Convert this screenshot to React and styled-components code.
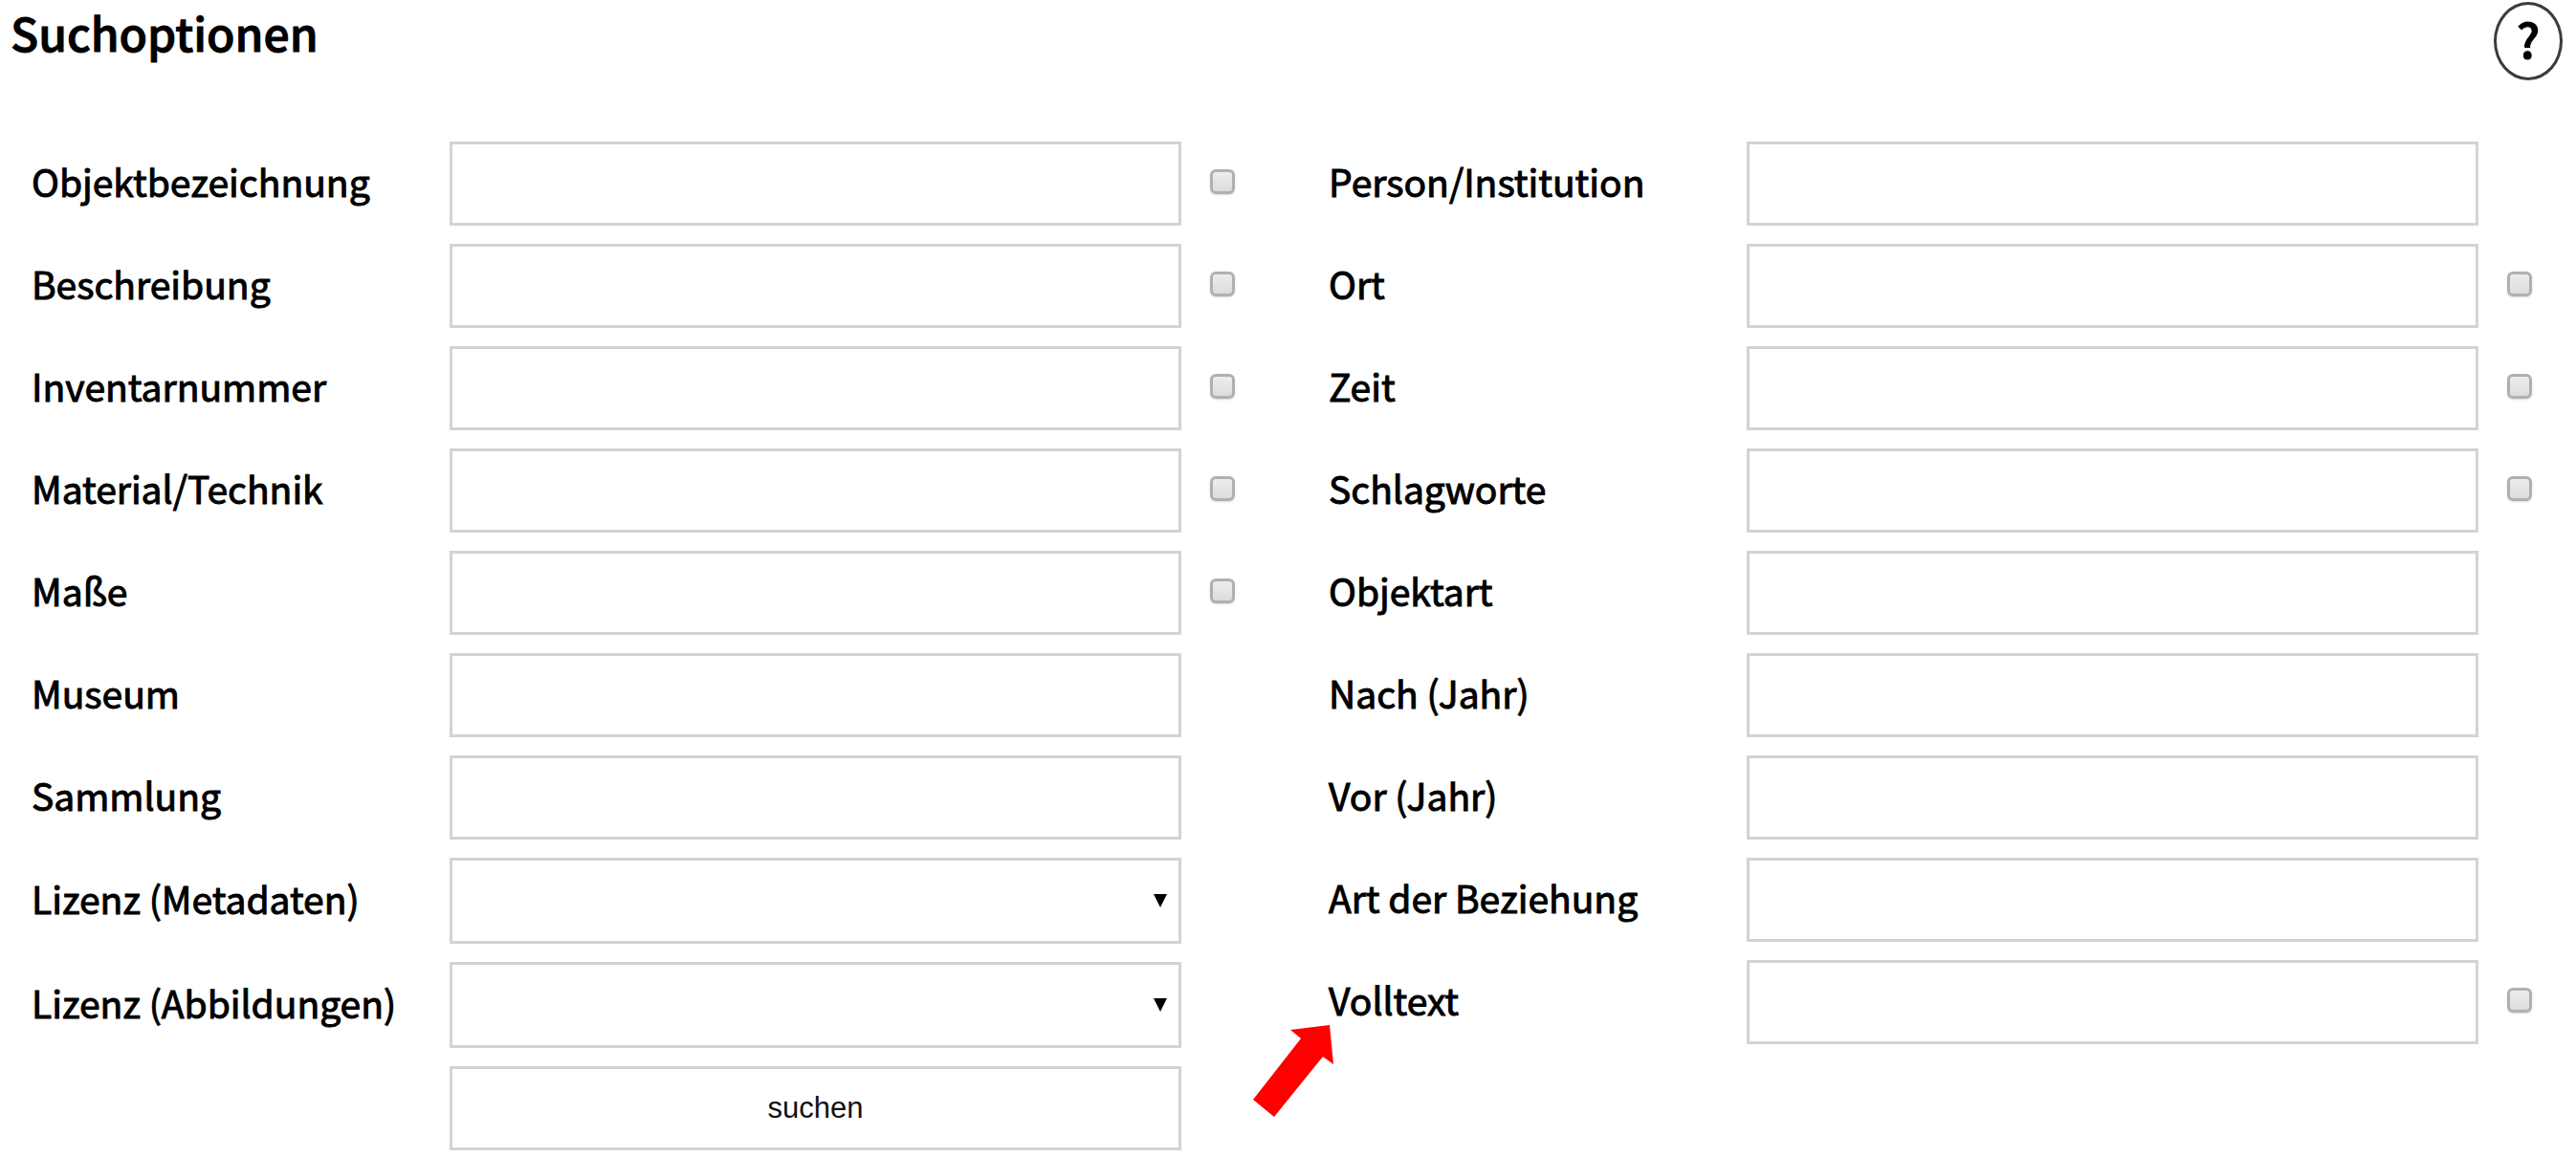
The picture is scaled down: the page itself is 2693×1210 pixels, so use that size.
import React from "react";
import styled, { createGlobalStyle } from "styled-components";

const GlobalStyle = createGlobalStyle`
  *, *::before, *::after { box-sizing: border-box; }
  body {
    margin: 0;
    background: #fff;
    color: #000;
    font-family: "Noto Sans CJK SC", "Noto Sans", sans-serif;
    font-weight: 400;
  }
`;

const Header = styled.header`
  display: flex;
  justify-content: space-between;
  align-items: flex-start;
  padding: 2px 14px 0 11px;
  margin-bottom: 64px;
`;

const Title = styled.h1`
  margin: 0;
  font-size: 48px;
  line-height: 62px;
  font-weight: 500;
  -webkit-text-stroke: 1px currentColor;
`;

const HelpButton = styled.button`
  width: 72px;
  height: 82px;
  padding: 0 0 8px;
  border: 3px solid #3c3c3c;
  border-radius: 50%;
  background: #fff;
  color: #000;
  font-family: inherit;
  font-size: 50px;
  line-height: 60px;
  font-weight: 500;
  -webkit-text-stroke: 1px currentColor;
`;

const Form = styled.form`
  display: grid;
  grid-template-columns: 1fr 1fr;
  column-gap: 98px;
  align-items: start;
  padding: 0 46px 0 33px;
`;

const Column = styled.div`
  display: grid;
  row-gap: 19px;
`;

const Label = styled.label`
  padding-bottom: 6px;
  font-size: 39px;
  line-height: 50px;
  white-space: nowrap;
  -webkit-text-stroke: 1px currentColor;
`;

const TextInput = styled.input`
  grid-column: 2;
  width: 100%;
  height: 88px;
  padding: 0 16px;
  border: 3px solid #d3d3d3;
  border-radius: 0;
  background: #fff;
  font-family: "Liberation Sans", sans-serif;
  font-size: 31px;
`;

const SelectBox = styled.div`
  position: relative;
`;

const Select = styled.select`
  appearance: none;
  display: block;
  width: 100%;
  height: 90px;
  padding: 0 48px 0 16px;
  border: 3px solid #d3d3d3;
  border-radius: 0;
  background: #fff;
  font-family: "Liberation Sans", sans-serif;
  font-size: 31px;
`;

const Caret = styled.svg`
  position: absolute;
  right: 15px;
  top: 38px;
  pointer-events: none;
`;

const CheckBox = styled.input`
  appearance: none;
  grid-column: 4;
  width: 26px;
  height: 26px;
  margin: 0 0 4px;
  border: 3px solid #b0b0b0;
  border-radius: 6px;
  background: linear-gradient(#ededed, #dcdcdc);
  box-shadow: 0 1px 2px rgba(0, 0, 0, 0.15);
  &:checked { background: #777; }
`;

const FieldRow = styled.div`
  position: relative;
  display: grid;
  grid-template-columns: 437px 1fr 30px 26px;
  align-items: center;
`;

const SubmitButton = styled.button`
  grid-column: 2;
  height: 88px;
  border: 3px solid #d3d3d3;
  background: #fff;
  color: #111;
  font-family: "Liberation Sans", sans-serif;
  font-size: 31px;
`;

const Pointer = styled.svg`
  position: absolute;
  left: -80px;
  top: 67px;
  pointer-events: none;
`;

const LEFT = [
  { id: "objekt", label: "Objektbezeichnung", check: true },
  { id: "beschreibung", label: "Beschreibung", check: true },
  { id: "inventar", label: "Inventarnummer", check: true },
  { id: "material", label: "Material/Technik", check: true },
  { id: "masse", label: "Maße", check: true },
  { id: "museum", label: "Museum" },
  { id: "sammlung", label: "Sammlung" },
  { id: "lizenz-meta", label: "Lizenz (Metadaten)", select: true },
  { id: "lizenz-abb", label: "Lizenz (Abbildungen)", select: true },
];

const RIGHT = [
  { id: "person", label: "Person/Institution" },
  { id: "ort", label: "Ort", check: true },
  { id: "zeit", label: "Zeit", check: true },
  { id: "schlagworte", label: "Schlagworte", check: true },
  { id: "objektart", label: "Objektart" },
  { id: "nach", label: "Nach (Jahr)" },
  { id: "vor", label: "Vor (Jahr)" },
  { id: "beziehung", label: "Art der Beziehung" },
  { id: "volltext", label: "Volltext", check: true, pointer: true },
];

function Field({ id, label, check, select, pointer }) {
  return (
    <FieldRow>
      <Label id={`${id}-label`} htmlFor={id}>{label}</Label>
      {select ? (
        <SelectBox>
          <Select id={id} name={id}>
            <option value="" aria-label={label} />
          </Select>
          <Caret width="14" height="14" viewBox="0 0 14 14" aria-hidden="true">
            <path d="M0 0H14L7 14Z" fill="#000" />
          </Caret>
        </SelectBox>
      ) : (
        <TextInput id={id} name={id} type="text" />
      )}
      {check && <CheckBox type="checkbox" name={`${id}-check`} aria-labelledby={`${id}-label`} />}
      {pointer && (
        <Pointer width="86" height="98" viewBox="0 0 86 98" aria-hidden="true">
          <path d="M81 1L40 6L51 15L1 79L23 97L74 34L85 42Z" fill="#f00" />
        </Pointer>
      )}
    </FieldRow>
  );
}

export default function App() {
  return (
    <>
      <GlobalStyle />
      <Header>
        <Title>Suchoptionen</Title>
        <HelpButton type="button">?</HelpButton>
      </Header>
      <Form onSubmit={(e) => e.preventDefault()}>
        <Column>
          {LEFT.map((f) => <Field key={f.id} {...f} />)}
          <FieldRow>
            <SubmitButton type="submit">suchen</SubmitButton>
          </FieldRow>
        </Column>
        <Column>
          {RIGHT.map((f) => <Field key={f.id} {...f} />)}
        </Column>
      </Form>
    </>
  );
}
